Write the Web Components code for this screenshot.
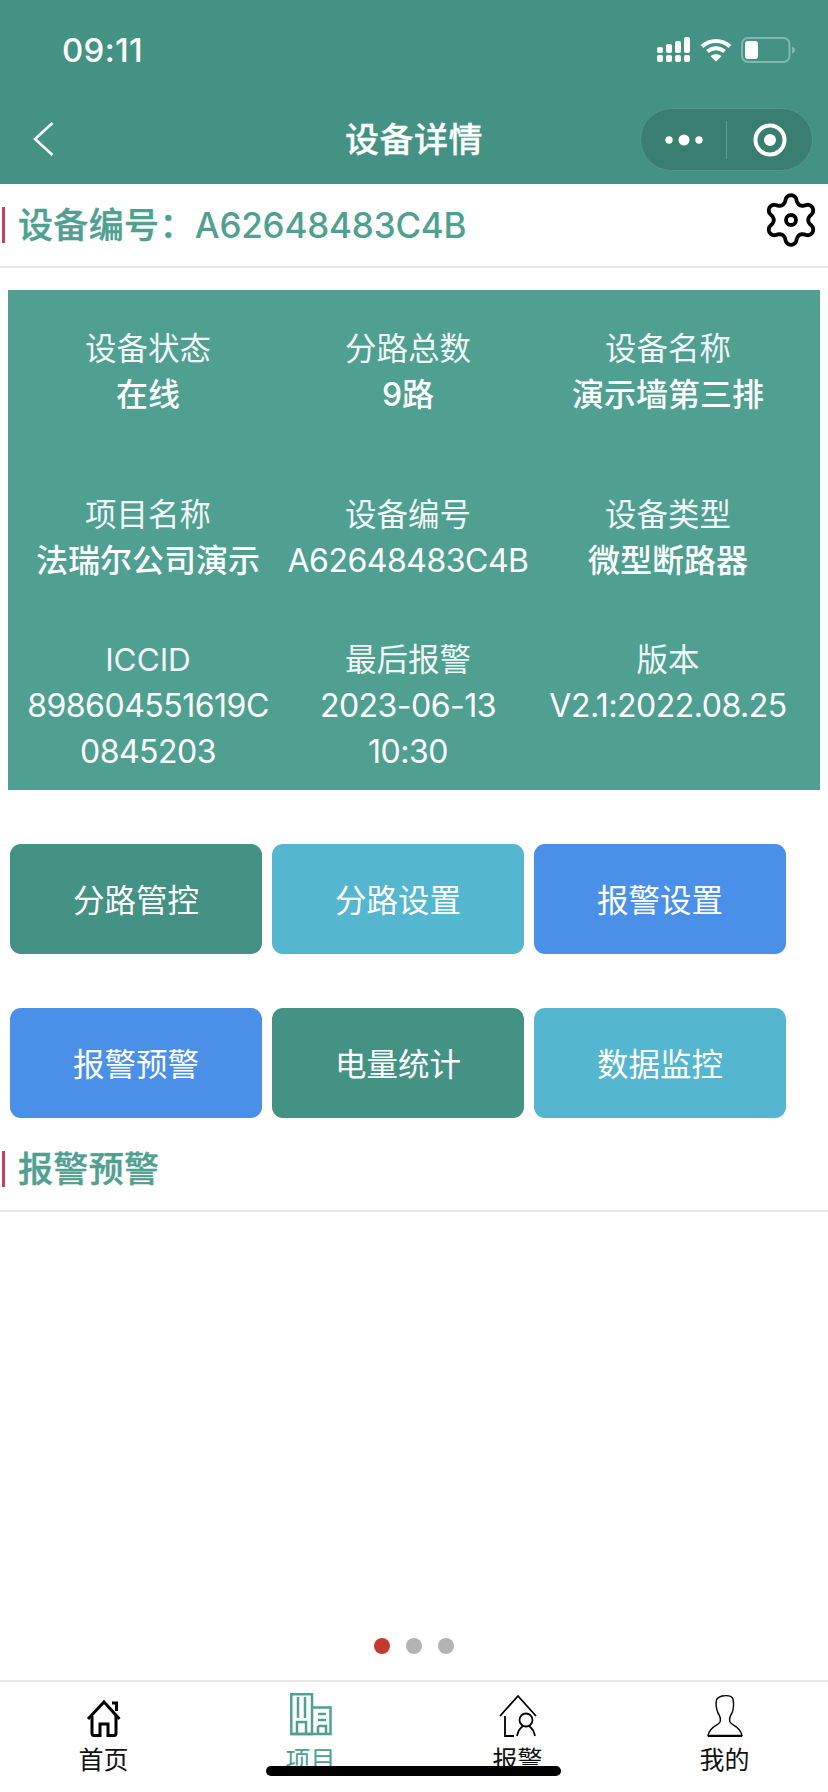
<!DOCTYPE html>
<html>
<head>
<meta charset="utf-8">
<title>设备详情</title>
<style>
html, body { margin: 0; padding: 0; background: #fff; }
body { width: 828px; height: 1792px; font-family: Inter, "Noto Sans CJK SC", sans-serif; display: flex; flex-direction: column; overflow: hidden; }
</style>
</head>
<body>
<nav-header title-text="设备详情"></nav-header>
<section-title text="设备编号：A62648483C4B" gear></section-title>
<info-panel>
  <info-cell label="设备状态" value="在线"></info-cell>
  <info-cell label="分路总数" value="9路"></info-cell>
  <info-cell label="设备名称" value="演示墙第三排"></info-cell>
  <info-cell label="项目名称" value="法瑞尔公司演示"></info-cell>
  <info-cell label="设备编号" value="A62648483C4B"></info-cell>
  <info-cell label="设备类型" value="微型断路器"></info-cell>
  <info-cell label="ICCID" value="898604551619C0845203"></info-cell>
  <info-cell label="最后报警" value="2023-06-13 10:30"></info-cell>
  <info-cell label="版本" value="V2.1:2022.08.25"></info-cell>
</info-panel>
<action-grid>
  <action-button color="#439283">分路管控</action-button>
  <action-button color="#54b6cf">分路设置</action-button>
  <action-button color="#4a90e9">报警设置</action-button>
  <action-button color="#4a90e9">报警预警</action-button>
  <action-button color="#439283">电量统计</action-button>
  <action-button color="#54b6cf">数据监控</action-button>
</action-grid>
<section-title text="报警预警"></section-title>
<page-dots></page-dots>
<tab-bar></tab-bar>

<script>
// six lobe outline for the settings icon
function gearPath(cx, cy) {
  let d = ''
  for (let i = 0; i < 144; i++) {
    const a = i / 144 * Math.PI * 2
    const c = Math.cos(6 * a)
    const r = 21 + 3.8 * Math.sign(c) * Math.pow(Math.abs(c), 0.65)
    const x = cx + r * Math.sin(a)
    const y = cy - r * Math.cos(a)
    d += (i ? 'L' : 'M') + x.toFixed(2) + ' ' + y.toFixed(2)
  }
  return d + 'Z'
}

class NavHeader extends HTMLElement {
  constructor() {
    super()
    this.attachShadow({ mode: 'open' })
  }
  connectedCallback() {
    this.shadowRoot.innerHTML = `
      <style>
        :host { display: block; height: 184px; background: #439283; color: #fff; flex: none; }
        .status { height: 100px; display: flex; align-items: center; justify-content: space-between; padding: 0 32px 0 62px; box-sizing: border-box; }
        .time { font-size: 33px; font-weight: 500; letter-spacing: .3px; }
        .icons { display: flex; align-items: center; gap: 9px; }
        .icons svg { display: block; }
        .nav { height: 84px; display: flex; align-items: center; position: relative; }
        .back { margin-left: 33px; margin-top: -6px; }
        .title { position: absolute; left: 0; right: 0; top: 0; line-height: 80px; text-align: center; font-size: 34px; font-weight: 500; letter-spacing: .5px; -webkit-text-stroke: .3px #fff; }
        .capsule { position: absolute; right: 15px; top: 8px; width: 173px; height: 63px; box-sizing: border-box; border-radius: 32px; background: #3a7d71; border: 1px solid #4f9a8c; display: flex; align-items: center; }
        .capsule .half { flex: 1; display: flex; justify-content: center; align-items: center; }
        .capsule .sep { width: 1px; height: 38px; background: #5c9f93; flex: none; }
      </style>
      <div class="status">
        <div class="time">09:11</div>
        <div class="icons">
          <svg width="34" height="26" viewBox="0 0 34 26" fill="#fff">
            <rect x="0" y="10" width="6" height="6" rx="2"/><rect x="9" y="7" width="6" height="9" rx="2"/><rect x="18" y="4" width="6" height="12" rx="2"/><rect x="27" y="0" width="6" height="16" rx="2"/>
            <rect x="0" y="18" width="6" height="7" rx="2"/><rect x="9" y="18" width="6" height="7" rx="2"/><rect x="18" y="18" width="6" height="7" rx="2"/><rect x="27" y="18" width="6" height="7" rx="2"/>
          </svg>
          <svg width="32" height="24" viewBox="0 0 32 24" fill="none" stroke="#fff" stroke-width="4">
            <path d="M2 8.500C10 1 22 1 30 8.500"/><path d="M7.500 13.500C12.500 9 19.500 9 24.500 13.500"/><path d="M16 23.500L10.500 18.200C13.500 15.600 18.500 15.600 21.500 18.200Z" fill="#fff" stroke="none"/>
          </svg>
          <svg width="55" height="26" viewBox="0 0 55 26">
            <rect x="1" y="1" width="47.500" height="24" rx="6" fill="none" stroke="#7dbbae" stroke-width="2"/>
            <rect x="4" y="4" width="13" height="18" rx="3" fill="#fff"/>
            <path d="M51 9.500C53 10 54 11.500 54 13C54 14.500 53 16 51 16.500Z" fill="#7dbbae"/>
          </svg>
        </div>
      </div>
      <div class="nav">
        <svg class="back" width="22" height="34" viewBox="0 0 22 34" fill="none" stroke="#fff" stroke-width="2.600"><path d="M19.500 1L2 17L19.500 33"/></svg>
        <div class="title">${this.getAttribute('title-text')}</div>
        <div class="capsule">
          <div class="half"><svg width="38" height="16" viewBox="0 0 38 16" fill="#fff"><circle cx="4" cy="8" r="3.700"/><circle cx="19" cy="8" r="5.500"/><circle cx="34" cy="8" r="3.700"/></svg></div>
          <div class="sep"></div>
          <div class="half"><svg width="34" height="34" viewBox="0 0 34 34"><circle cx="17" cy="17" r="14.500" fill="none" stroke="#fff" stroke-width="4"/><circle cx="17" cy="17" r="6" fill="#fff"/></svg></div>
        </div>
      </div>
    `
  }
}

class SectionTitle extends HTMLElement {
  constructor() {
    super()
    this.attachShadow({ mode: 'open' })
  }
  connectedCallback() {
    const gear = this.hasAttribute('gear') ? `
      <svg class="gear" width="52" height="56" viewBox="0 0 52 56" fill="none" stroke="#000" stroke-width="3.800" stroke-linejoin="round">
        <path d="${gearPath(26, 28)}"/>
        <circle cx="26" cy="28" r="5"/>
      </svg>` : ''
    const text = this.getAttribute('text').replace(/[A-Za-z0-9]+/, '<span class="num">$&</span>')
    this.shadowRoot.innerHTML = `
      <style>
        :host { display: block; flex: none; }
        .row { display: flex; align-items: center; height: 84px; box-sizing: border-box; border-bottom: 2px solid #e8e8e8; padding-left: 2px; position: relative; }
        .bar { width: 3px; height: 36px; background: #c9405a; margin-right: 13px; flex: none; }
        .text { font-size: 35px; font-weight: 500; color: #4fa091; line-height: 40px; letter-spacing: .35px; -webkit-text-stroke: .4px #4fa091; }
        .num { letter-spacing: -.2px; -webkit-text-stroke: 0; }
        .gear { position: absolute; right: 11px; top: 8px; }
      </style>
      <div class="row">
        <div class="bar"></div>
        <div class="text">${text}</div>
        ${gear}
      </div>
    `
  }
}

class InfoPanel extends HTMLElement {
  constructor() {
    super()
    this.attachShadow({ mode: 'open' })
    this.shadowRoot.innerHTML = `
      <style>
        :host { display: grid; flex: none; box-sizing: border-box; margin: 22px 8px 0; height: 500px; background: #4fa091; padding: 36px 18px 0 10px; grid-template-columns: repeat(3, 260px); grid-template-rows: 166px 145px auto; }
      </style>
      <slot></slot>
    `
  }
}

class InfoCell extends HTMLElement {
  constructor() {
    super()
    this.attachShadow({ mode: 'open' })
  }
  connectedCallback() {
    const value = this.getAttribute('value')
    const latin = /^[\x00-\x7f]+$/.test(value)
    this.shadowRoot.innerHTML = `
      <style>
        :host { display: block; color: #fff; text-align: center; font-size: 32px; line-height: 46px; }
        .label { opacity: .92; font-size: 31.500px; }
        .value { font-weight: 500; overflow-wrap: anywhere; padding: 0 2px; }
        .value.latin { font-weight: 400; letter-spacing: -.5px; }
      </style>
      <div class="label">${this.getAttribute('label')}</div>
      <div class="value${latin ? ' latin' : ''}">${value}</div>
    `
  }
}

class ActionGrid extends HTMLElement {
  constructor() {
    super()
    this.attachShadow({ mode: 'open' })
    this.shadowRoot.innerHTML = `
      <style>
        :host { display: grid; flex: none; margin: 54px 0 10px 10px; grid-template-columns: repeat(3, 252px); grid-auto-rows: 110px; column-gap: 10px; row-gap: 54px; }
      </style>
      <slot></slot>
    `
  }
}

class ActionButton extends HTMLElement {
  constructor() {
    super()
    this.attachShadow({ mode: 'open' })
  }
  connectedCallback() {
    this.shadowRoot.innerHTML = `
      <style>
        :host { display: flex; align-items: center; justify-content: center; padding-bottom: 3px; box-sizing: border-box; border-radius: 11px; background: ${this.getAttribute('color')}; color: #fff; font-size: 31.500px; }
      </style>
      <slot></slot>
    `
  }
}

class PageDots extends HTMLElement {
  constructor() {
    super()
    this.attachShadow({ mode: 'open' })
    this.shadowRoot.innerHTML = `
      <style>
        :host { display: flex; flex: none; justify-content: center; gap: 16px; margin-top: auto; padding-bottom: 26px; }
        i { width: 16px; height: 16px; border-radius: 50%; background: #b3b3b3; }
        i:first-of-type { background: #c53a30; }
      </style>
      <i></i><i></i><i></i>
    `
  }
}

class TabBar extends HTMLElement {
  constructor() {
    super()
    this.attachShadow({ mode: 'open' })
    this.shadowRoot.innerHTML = `
      <style>
        :host { display: grid; flex: none; grid-template-columns: repeat(4, 207px); height: 110px; border-top: 2px solid #e8e8e8; position: relative; }
        .tab { display: flex; flex-direction: column; align-items: center; font-size: 25px; color: #111; }
        .tab svg { display: block; height: 44px; margin-top: 13px; margin-bottom: 5px; overflow: visible; }
        .tab.on { color: #4fa091; }
        .tab span { line-height: 32px; }
        .home-bar { position: absolute; left: 266px; top: 84px; width: 295px; height: 10px; border-radius: 5px; background: #000; }
      </style>
      <div class="tab">
        <svg width="38" height="44" viewBox="0 0 38 44" fill="none" stroke="#000" stroke-width="3">
          <path d="M3 24L19 7L34.500 24"/><path d="M7 21V38C7 39.500 8 40.500 9 40.500H15V29H23V40.500H29C30 40.500 31 39.500 31 38V21"/><path d="M27 8H31.500V16"/>
        </svg>
        <span>首页</span>
      </div>
      <div class="tab on">
        <svg width="42" height="44" viewBox="0 0 42 44" fill="none" stroke="#4fa091" stroke-width="2.500" style="margin-top:11px;margin-bottom:7px">
          <path d="M1.300 41V1.300H22V41Z"/><path d="M22 14.500H40.500V41H1.300"/>
          <path d="M8 4V25M15 4V25"/><path d="M7 41V29H16V41"/><path d="M28 21H36M28 27H36M28 33H36V41M28 33V41"/>
        </svg>
        <span>项目</span>
      </div>
      <div class="tab">
        <svg width="38" height="44" viewBox="0 0 38 44" fill="none" stroke="#000" stroke-width="1.800">
          <path d="M1 21L19 1L37 21"/><path d="M6 21V41H15"/>
          <circle cx="27" cy="25" r="6.500"/><path d="M18 41C19 36 21 33 24 31M30 31C33 33 35 36 36 41"/>
        </svg>
        <span>报警</span>
      </div>
      <div class="tab">
        <svg width="36" height="44" viewBox="0 0 36 44" fill="none" stroke="#000" stroke-width="1.400">
          <path d="M15 1C21 0 25 1 26 4C27 9 27 13 25 18C23 21 22 24 23 27C25 31 33 31 35 40.500H1C3 31 11 31 13 27C14 24 13 21 11 18C9 13 8.500 9 9.500 5C10 3 12 2 15 1Z"/>
          <path d="M1 41.500H35" stroke-width="1.200"/>
        </svg>
        <span>我的</span>
      </div>
      <div class="home-bar"></div>
    `
  }
}

customElements.define('nav-header', NavHeader)
customElements.define('section-title', SectionTitle)
customElements.define('info-panel', InfoPanel)
customElements.define('info-cell', InfoCell)
customElements.define('action-grid', ActionGrid)
customElements.define('action-button', ActionButton)
customElements.define('page-dots', PageDots)
customElements.define('tab-bar', TabBar)
</script>
</body>
</html>
